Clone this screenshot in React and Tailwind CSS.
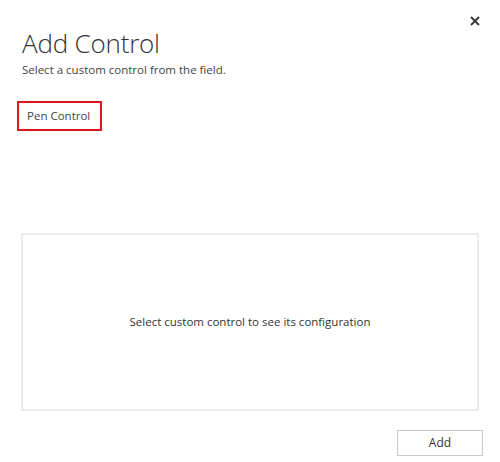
import React from 'react';

const App = () => {
  return (
    <div
      className="w-[500px] h-[462px] bg-white flex flex-col text-[#333]"
      style={{ fontFamily: '"Open Sans", "Noto Sans", sans-serif' }}
    >
      <div className="flex justify-end pt-[16px] pr-[20px] h-[30px]">
        <button aria-label="Close" className="w-[10px] h-[10px] flex items-center justify-center">
          <svg width="10" height="10" viewBox="0 0 10 10">
            <path d="M1 1L9 9M9 1L1 9" stroke="#333" strokeWidth="1.8" />
          </svg>
        </button>
      </div>

      <div className="px-[22px]">
        <h1 className="text-[26px] leading-[30px] -mt-[2px] font-light tracking-[-0.2px] text-[#333]">Add Control</h1>
        <p className="text-[11.5px] leading-[14px] mt-[5px] text-[#444]">Select a custom control from the field.</p>
      </div>

      <div className="px-[17px] mt-[24px]">
        <div className="inline-flex items-center h-[30px] border-2 border-[#e3121e] pl-[8px] pr-[10px] text-[11.5px] text-[#444]">
          Pen Control
        </div>
      </div>

      <div className="mx-[21px] mt-[102px] h-[178px] border-2 border-[#ececec] flex items-center justify-center">
        <span className="text-[11.5px] text-[#333]">Select custom control to see its configuration</span>
      </div>

      <div className="flex justify-end mr-[17px] mt-[19px]">
        <button className="w-[86px] h-[26px] border border-[#c8c8c8] text-[12px] text-[#333] bg-white">Add</button>
      </div>
    </div>
  );
};

export default App;
